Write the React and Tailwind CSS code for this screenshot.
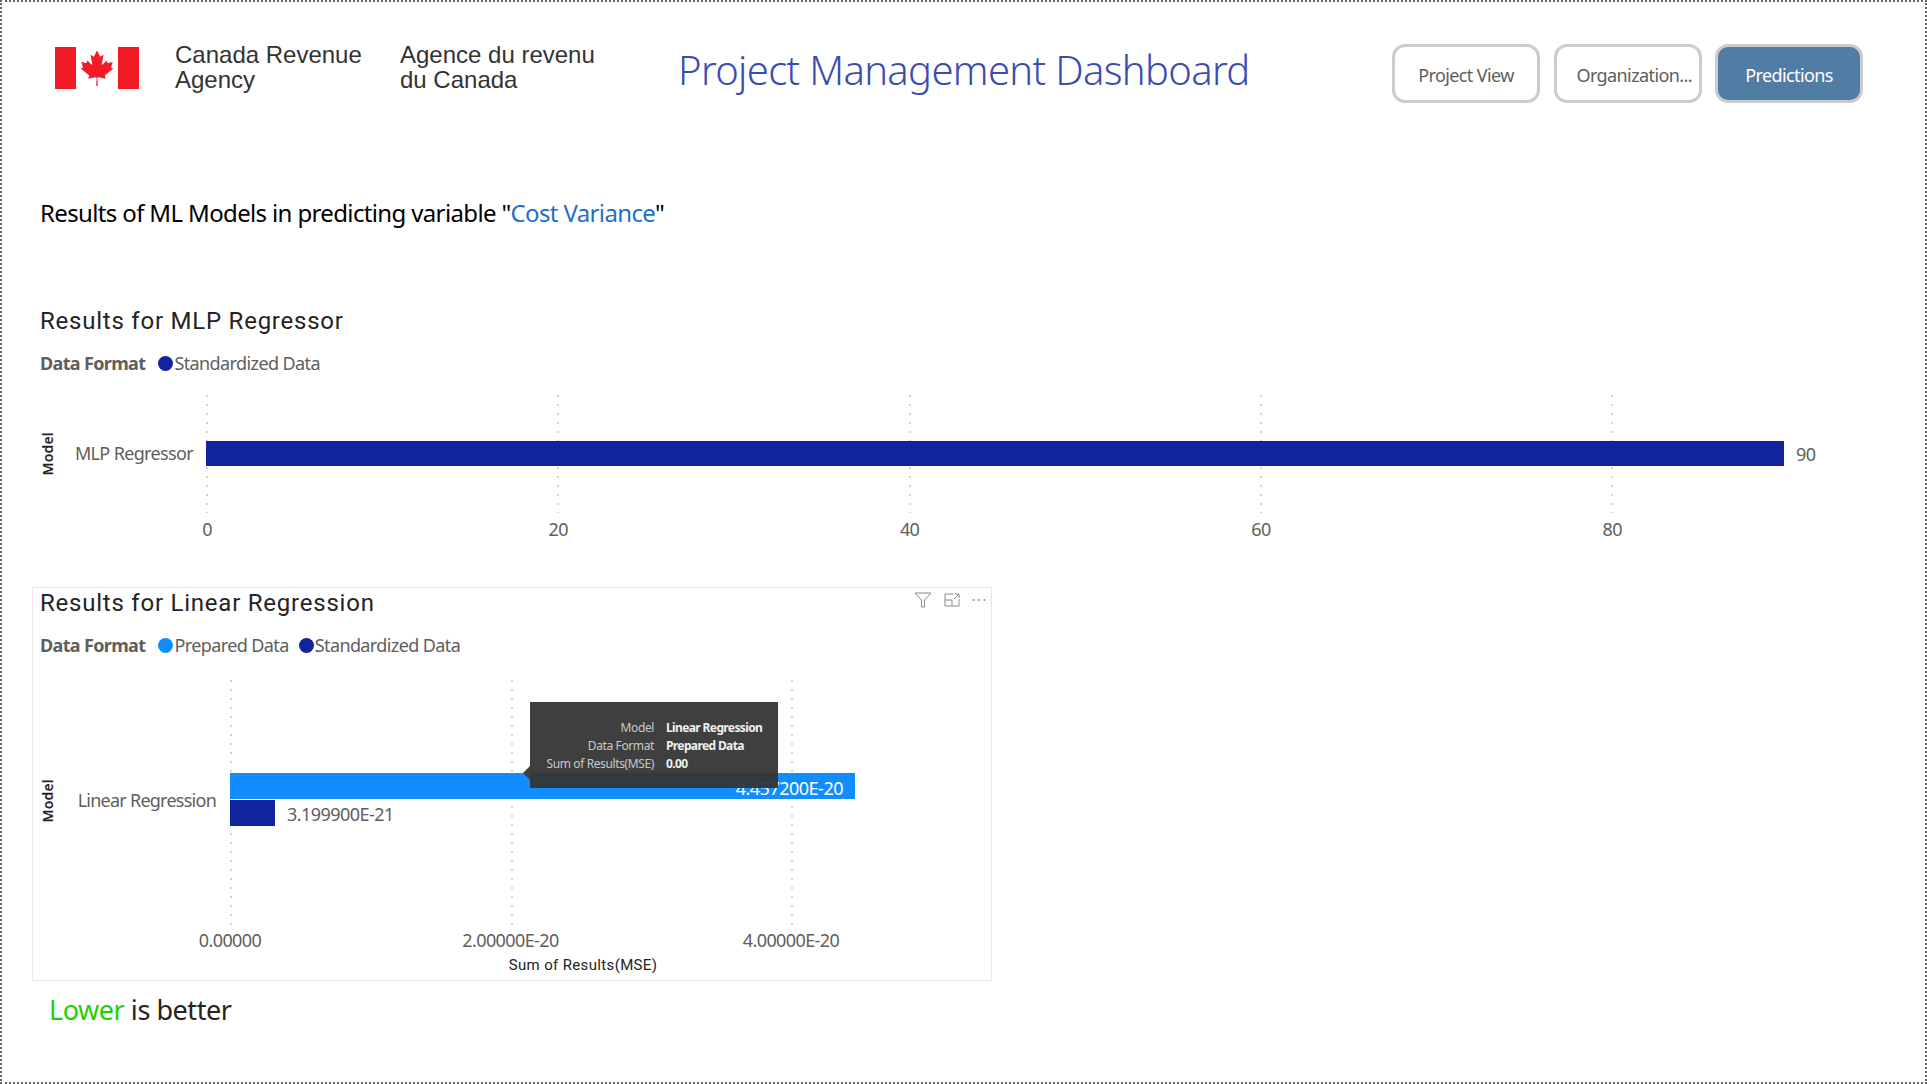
function Flag() {
  return (
    <svg width="84" height="42" viewBox="0 0 9600 4800" className="block shrink-0">
      <path fill="#f31b27" d="M0 0h2400v4800H0zM7200 0h2400v4800H7200z" />
      <path fill="#f31b27" d="M4890 4430l-45-863a95 95 0 0 1 111-98l859 151-116-320a65 65 0 0 1 20-73l941-762-212-99a65 65 0 0 1-34-79l186-572-542 115a65 65 0 0 1-73-38l-105-247-423 454a65 65 0 0 1-111-57l204-1052-327 189a65 65 0 0 1-91-27l-332-652-332 652a65 65 0 0 1-91 27l-327-189 204 1052a65 65 0 0 1-111 57l-423-454-105 247a65 65 0 0 1-73 38l-542-115 186 572a65 65 0 0 1-34 79l-212 99 941 762a65 65 0 0 1 20 73l-116 320 859-151a95 95 0 0 1 111 98l-45 863z" />
    </svg>
  );
}

function NavButton({ label, active, left }) {
  return (
    <div
      className={
        "w-[148px] h-[59px] rounded-[13px] border-[3px] border-[#cccccc] flex items-center pt-[4px] text-[18px] tracking-[-0.6px] " +
        (active ? "bg-[#517ca4] text-white justify-center" : "bg-white text-[#605e5c] ") +
        (left ? " pl-[20px]" : active ? "" : " justify-center")
      }
    >
      {label}
    </div>
  );
}

function Legend({ items }) {
  return (
    <div className="flex items-center h-6 text-[18px] tracking-[-0.6px] text-[#605e5c]">
      <span className="font-bold mr-[12px] tracking-[-0.65px]">Data Format</span>
      {items.map((it) => (
        <span key={it.label} className="flex items-center mr-[9px]">
          <span className={"w-[15px] h-[15px] rounded-full ml-px mr-[1px] " + it.dot} />
          {it.label}
        </span>
      ))}
    </div>
  );
}

function ModelLabel({ shift }) {
  return (
    <span className={"[writing-mode:vertical-rl] rotate-180 self-center text-[14px] font-semibold text-[#252423] tracking-[0.2px] w-[15px] flex items-center justify-center " + shift}>
      Model
    </span>
  );
}

function Grid({ step, count }) {
  return (
    <div className="absolute inset-0 flex pointer-events-none">
      {Array.from({ length: count }).map((_, i) => (
        <div key={i} className="shrink-0" style={{ width: step }}>
          <div className="h-full w-[2px] bg-[linear-gradient(#d4d4d4_2px,transparent_2px)] bg-[length:2px_9px]" />
        </div>
      ))}
    </div>
  );
}

function Axis({ step, labels }) {
  return (
    <div className="flex h-6 items-center text-[18px] tracking-[-0.6px] text-[#605e5c]">
      {labels.map((l) => (
        <div key={l} className="shrink-0" style={{ width: step }}>
          <span className="inline-block -translate-x-1/2 whitespace-nowrap">{l}</span>
        </div>
      ))}
    </div>
  );
}

function Tooltip() {
  const rows = [
    ["Model", "Linear Regression"],
    ["Data Format", "Prepared Data"],
    ["Sum of Results(MSE)", "0.00"],
  ];
  return (
    <div className="absolute left-[300px] top-[22px] w-[248px] h-[86px] bg-[#353535]/95 pt-[17px] pl-[15px] text-[12px] leading-[18px]">
      <div className="absolute left-[-7px] top-[64px] w-0 h-0 border-y-[7px] border-y-transparent border-r-[7px] border-r-[#404040]" />
      {rows.map(([a, b]) => (
        <div key={a} className="flex">
          <span className="w-[109px] text-right text-[#c8c8c8] whitespace-nowrap tracking-[-0.38px]">{a}</span>
          <span className="ml-[12px] font-bold text-[#f0f0f0] whitespace-nowrap tracking-[-0.62px]">{b}</span>
        </div>
      ))}
    </div>
  );
}

function VisualIcons() {
  return (
    <div className="absolute right-[4px] top-[4px] flex items-center gap-[11.5px] text-[#8a8a8a]">
      <svg width="18" height="16" viewBox="0 0 18 16" fill="none" stroke="currentColor" strokeWidth="1">
        <path d="M1 1h16l-6.5 7v7h-3V8z" />
      </svg>
      <svg width="16" height="14" viewBox="0 0 16 14" fill="none" stroke="currentColor" strokeWidth="1">
        <path d="M9 1H1v12h14V6M1 7h7v6M10 6l5-5M11 1h4v4" />
      </svg>
      <svg width="16" height="14" viewBox="0 0 16 14" fill="currentColor">
        <circle cx="2.5" cy="7" r="1" />
        <circle cx="8" cy="7" r="1" />
        <circle cx="13.5" cy="7" r="1" />
      </svg>
    </div>
  );
}

const din = "font-['Roboto',sans-serif]";

export default function App() {
  return (
    <div className="w-[1927px] h-[1084px] box-border border-2 border-dotted border-[#666666] bg-white overflow-hidden flex flex-col font-['Noto_Sans',sans-serif]">
      {/* Header */}
      <div className="flex items-start h-[130px] shrink-0 pl-[53px]">
        <div className="mt-[45px]">
          <Flag />
        </div>
        <div className="ml-[36px] w-[225px] mt-[40px] font-['Liberation_Sans',sans-serif] text-[24px] leading-[25px] text-[#333333] whitespace-nowrap">
          Canada Revenue<br />Agency
        </div>
        <div className="w-[279px] mt-[40px] font-['Liberation_Sans',sans-serif] text-[24px] leading-[25px] text-[#333333] whitespace-nowrap">
          Agence du revenu<br />du Canada
        </div>
        <div className="-ml-px mt-[44px] h-12 leading-[48px] text-[40px] font-light tracking-[-0.67px] text-[#3b4cb0] whitespace-nowrap">
          Project Management Dashboard
        </div>
        <div className="ml-auto mr-[62px] mt-[42px] flex gap-[13.5px]">
          <NavButton label="Project View" />
          <NavButton label="Organization..." left />
          <NavButton label="Predictions" active />
        </div>
      </div>

      {/* Subtitle */}
      <div className="mt-[65px] ml-[38px] h-8 leading-8 text-[24px] tracking-[-0.64px] text-black whitespace-nowrap">
        Results of ML Models in predicting variable "<span className="text-[#1f6fc4]">Cost Variance</span>"
      </div>

      {/* MLP chart */}
      <div className="ml-[38px]">
        <div className={"mt-[76px] h-8 leading-8 text-[24px] tracking-[0.77px] text-[#252423] " + din}>
          Results for MLP Regressor
        </div>
        <div className="mt-[14px]">
          <Legend items={[{ label: "Standardized Data", dot: "bg-[#12239e]" }]} />
        </div>
        <div className="mt-[20px] flex h-[118px]">
          <ModelLabel shift="" />
          <div className="w-[138px] self-center -translate-y-px text-right text-[18px] tracking-[-0.65px] text-[#605e5c] whitespace-nowrap">
            MLP Regressor
          </div>
          <div className="ml-[13px] relative w-[1700px] flex items-center pb-[2px]">
            <Grid step={351.3} count={5} />
            <div className="relative w-[1578px] h-[25px] bg-[#12239e]" />
            <span className="relative top-[1px] ml-[12px] text-[18px] tracking-[-0.6px] text-[#605e5c]">90</span>
          </div>
        </div>
        <div className="ml-[167px] mt-[4px]">
          <Axis step={351.3} labels={["0", "20", "40", "60", "80"]} />
        </div>
      </div>

      {/* Linear chart */}
      <div className="mt-[46px] ml-[30px] w-[960px] h-[394px] shrink-0 box-border border border-[#e8e8e8] relative">
        <VisualIcons />
        <div className={"ml-[7px] -mt-px h-8 leading-8 text-[24px] tracking-[0.77px] text-[#252423] " + din}>
          Results for Linear Regression
        </div>
        <div className="ml-[7px] mt-[14px]">
          <Legend
            items={[
              { label: "Prepared Data", dot: "bg-[#118dff]" },
              { label: "Standardized Data", dot: "bg-[#12239e]" },
            ]}
          />
        </div>
        <div className="ml-[7px] mt-[23px] flex h-[245px]">
          <ModelLabel shift="-translate-y-[2px]" />
          <div className="w-[161px] self-center -translate-y-[2px] text-right text-[18px] tracking-[-0.75px] text-[#605e5c] whitespace-nowrap">
            Linear Regression
          </div>
          <div className="ml-[14px] relative w-[720px] flex flex-col justify-center pb-[6px]">
            <Grid step={280.5} count={3} />
            <div className="relative w-[625px] h-[26px] bg-[#118dff] flex items-center justify-end pr-[12px] pt-[6px] text-[18px] tracking-[-0.5px] text-white">
              4.457200E-20
            </div>
            <div className="relative mt-[1px] flex items-center text-[18px] tracking-[-0.55px] text-[#605e5c]">
              <div className="w-[45px] h-[26px] bg-[#12239e]" />
              <span className="ml-[12px] relative top-[1px]">3.199900E-21</span>
            </div>
            <Tooltip />
          </div>
        </div>
        <div className="ml-[197px] mt-[3px]">
          <Axis step={280.5} labels={["0.00000", "2.00000E-20", "4.00000E-20"]} />
        </div>
        <div className={"ml-[400px] w-[300px] mt-[3px] h-5 leading-5 text-center text-[15px] tracking-[0.35px] text-[#252423] " + din}>
          Sum of Results(MSE)
        </div>
      </div>

      {/* Footnote */}
      <div className="mt-[10px] ml-[47px] h-[38px] leading-[38px] text-[27px] tracking-[-0.45px] text-[#252423]">
        <span className="text-[#1fd000]">Lower</span> is better
      </div>
    </div>
  );
}
